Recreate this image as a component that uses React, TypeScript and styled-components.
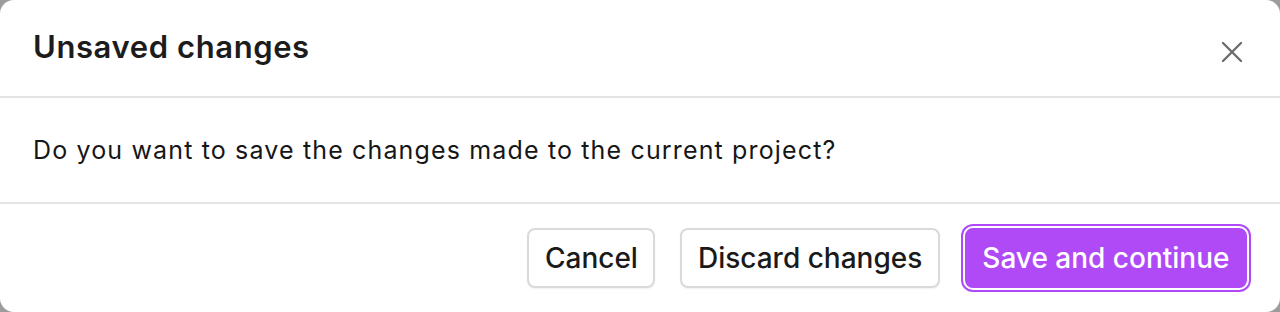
import React from "react";
import styled, { createGlobalStyle } from "styled-components";

const Global = createGlobalStyle`
  html, body { margin: 0; padding: 0; background: #9c9c9c; }
  body { font-family: Inter, "Noto Sans", sans-serif; -webkit-font-smoothing: antialiased; }
  * { box-sizing: border-box; }
`;

const Dialog = styled.div`
  width: 1280px;
  height: 312px;
  background: #ffffff;
  border-radius: 14px;
  display: flex;
  flex-direction: column;
  overflow: hidden;
`;

const Header = styled.div`
  height: 98px;
  padding: 0 28px 0 33px;
  display: flex;
  align-items: center;
  justify-content: space-between;
  border-bottom: 2px solid #e4e4e4;
`;

const Title = styled.h2`
  margin: 0 0 4px;
  font-size: 31px;
  font-weight: 600;
  color: #1c1c1c;
  letter-spacing: 0.6px;
`;

const CloseButton = styled.button`
  width: 40px;
  height: 40px;
  margin-top: 8px;
  border: none;
  background: transparent;
  display: flex;
  align-items: center;
  justify-content: center;
  padding: 0;
  cursor: pointer;
`;

const Body = styled.div`
  height: 106px;
  padding: 0 33px;
  display: flex;
  align-items: center;
  border-bottom: 2px solid #e4e4e4;
  font-size: 25px;
  letter-spacing: 1.15px;
  color: #161616;
`;

const Footer = styled.div`
  flex: 1;
  display: flex;
  align-items: center;
  justify-content: flex-end;
  padding-right: 33px;
  gap: 25px;
`;

const Button = styled.button<{ $primary?: boolean }>`
  height: 60px;
  padding: 0 15.5px;
  border-radius: 8px;
  font-family: Inter, "Noto Sans", sans-serif;
  font-size: 28px;
  font-weight: 500;
  cursor: pointer;
  border: 2px solid ${(p) => (p.$primary ? "#b04af7" : "#dadada")};
  background: ${(p) => (p.$primary ? "#b04af7" : "#ffffff")};
  color: ${(p) => (p.$primary ? "#ffffff" : "#1a1a1a")};
  box-shadow: ${(p) =>
    p.$primary
      ? "0 0 0 2px #ffffff, 0 0 0 4px #b04af7"
      : "0 1px 2px rgba(0,0,0,0.06)"};
`;

export default function App() {
  return (
    <>
      <Global />
      <Dialog>
        <Header>
          <Title>Unsaved changes</Title>
          <CloseButton aria-label="Close">
            <svg width="24" height="24" viewBox="0 0 24 24" fill="none" stroke="#6b6b6b" strokeWidth="2.3" strokeLinecap="round">
              <path d="M3 3 L21 21 M21 3 L3 21" />
            </svg>
          </CloseButton>
        </Header>
        <Body>Do you want to save the changes made to the current project?</Body>
        <Footer>
          <Button>Cancel</Button>
          <Button>Discard changes</Button>
          <Button $primary>Save and continue</Button>
        </Footer>
      </Dialog>
    </>
  );
}
